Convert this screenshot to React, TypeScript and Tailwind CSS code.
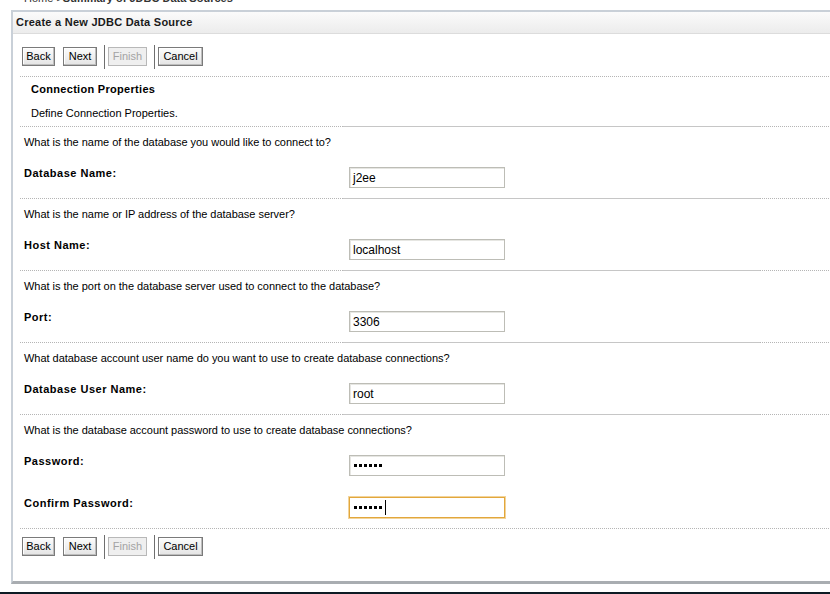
import React from 'react'

const font = "font-['Liberation_Sans',Arial,sans-serif]"

function Btn({ label, w, disabled }: { label: string; w: string; disabled?: boolean }) {
  return (
    <div
      className={`${w} h-[19px] flex items-center justify-center text-[11px] leading-none border ${
        disabled
          ? 'border-[#b8b8b8] text-[#a3a3a3] bg-[#efefef]'
          : 'border-[#7a7a7a] text-black bg-[linear-gradient(#fcfcfc,#e4e4e4)] shadow-[inset_-1px_-1px_0_#bdbdbd,inset_1px_1px_0_#ffffff]'
      }`}
    >
      {label}
    </div>
  )
}

function Sep() {
  return <div className="w-px h-[24px] bg-[#6f6f6f]" />
}

function ButtonRow() {
  return (
    <div className="ml-[9px] h-[23px] flex items-center">
      <Btn label="Back" w="w-[33px]" />
      <div className="w-[8px]" />
      <Btn label="Next" w="w-[34px]" />
      <div className="w-[7px]" />
      <Sep />
      <div className="w-[3px]" />
      <Btn label="Finish" w="w-[39px]" disabled />
      <div className="w-[7px]" />
      <Sep />
      <div className="w-[3px]" />
      <Btn label="Cancel" w="w-[45px]" />
    </div>
  )
}

function DottedLine() {
  return <div className="ml-[7px] h-px border-t border-dotted border-[#b5b5b5]" />
}

function MixedLine() {
  return (
    <div className="ml-[7px] h-px flex">
      <div className="w-[323px] border-t border-dotted border-[#b5b5b5]" />
      <div className="w-[417px] border-t border-[#c6c6c6]" />
      <div className="flex-1 border-t border-dotted border-[#b5b5b5]" />
    </div>
  )
}

function Field({ value, password, focused }: { value: string; password?: boolean; focused?: boolean }) {
  return (
    <div
      className={`mt-[1px] ml-[1px] w-[156px] h-[21px] flex items-center pl-[3px] bg-white ${
        focused
          ? 'border border-[#e2a73c] shadow-[0_0_0_1px_#f3d49a]'
          : 'border border-[#bdbdb6] shadow-[inset_1px_1px_0_#e6e6e2]'
      }`}
    >
      {password ? (
        <div className="flex items-center gap-[2px] pl-[1px]">
          {Array.from({ length: 6 }).map((_, i) => (
            <span key={i} className="w-[3px] h-[3px] bg-black" />
          ))}
          {focused && <span className="ml-[1px] w-px h-[15px] bg-black" />}
        </div>
      ) : (
        <span className="text-[12px] leading-none text-black">{value}</span>
      )}
    </div>
  )
}

function Row({ label, children, top = 'pt-[9px]' }: { label: string; children: React.ReactNode; top?: string }) {
  return (
    <div className={`${top} pl-[11px] flex items-start`}>
      <div className="w-[324px] text-[11px] leading-[14px] font-bold tracking-[0.5px]">{label}</div>
      {children}
    </div>
  )
}

function Question({ text }: { text: string }) {
  return (
    <div className="h-[30px] pt-[8px] pl-[11px] text-[11px] leading-[14px] tracking-[-0.03px]">{text}</div>
  )
}

const blocks = [
  { q: 'What is the name of the database you would like to connect to?', label: 'Database Name:', value: 'j2ee' },
  { q: 'What is the name or IP address of the database server?', label: 'Host Name:', value: 'localhost' },
  { q: 'What is the port on the database server used to connect to the database?', label: 'Port:', value: '3306' },
  { q: 'What database account user name do you want to use to create database connections?', label: 'Database User Name:', value: 'root' },
]

export default function App() {
  return (
    <div className={`${font} w-[830px] h-[594px] bg-white text-black overflow-hidden flex flex-col`}>
      {/* breadcrumb, mostly scrolled off the top of the view */}
      <div className="h-[10px] overflow-hidden">
        <div className="-mt-[9px] ml-[24px] text-[11px] leading-[14px] text-[#333] whitespace-nowrap">
          Home &gt;<span className="font-bold">Summary of JDBC Data Sources</span>
        </div>
      </div>

      <div className="ml-[11px] w-[830px] h-[574px] border-l-2 border-t-2 border-[#c9d0d8] border-b-[3px] border-b-[#a9adb1]">
        <div className="h-[22px] border-b border-[#dcdcdc] bg-[linear-gradient(#fbfbfb,#f4f4f4_45%,#ececec)] pl-[3px] flex items-center">
          <span className="text-[11px] font-bold tracking-[0.25px] text-[#1a1a1a]">Create a New JDBC Data Source</span>
        </div>

        <div className="mt-[11px]">
          <ButtonRow />
        </div>
        <div className="mt-[8px]">
          <DottedLine />
        </div>

        <div className="h-[24px] pl-[18px] flex items-center text-[11px] font-bold tracking-[0.3px]">
          Connection Properties
        </div>
        <div className="h-[25px] pl-[18px] flex items-center text-[11px]">Define Connection Properties.</div>

        {blocks.map((b) => (
          <div key={b.label}>
            <MixedLine />
            <Question text={b.q} />
            <Row label={b.label}>
              <Field value={b.value} />
            </Row>
            <div className="h-[10px]" />
          </div>
        ))}

        <MixedLine />
        <Question text="What is the database account password to use to create database connections?" />
        <Row label="Password:">
          <Field value="" password />
        </Row>
        <Row label="Confirm Password:" top="pt-[20px]">
          <Field value="" password focused />
        </Row>

        <div className="mt-[10px]">
          <DottedLine />
        </div>
        <div className="mt-[6px]">
          <ButtonRow />
        </div>
      </div>

      <div className="mt-auto h-[2px] bg-[#0d1b24]" />
    </div>
  )
}
